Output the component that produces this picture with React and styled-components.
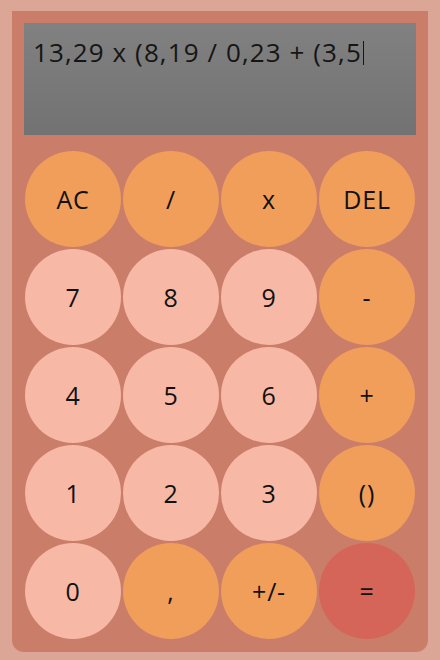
import styled, { createGlobalStyle } from "styled-components";

const GlobalStyle = createGlobalStyle`
  html, body {
    margin: 0;
    padding: 0;
    background: #dca696;
  }
  body {
    font-family: "Open Sans", "Liberation Sans", sans-serif;
  }
`;

const Page = styled.div`
  padding: 11px 12px 8px;
`;

const Calculator = styled.div`
  background: #ca7e6a;
  border-radius: 0 0 12px 12px;
  padding: 12px 12px 13px;
  display: flex;
  flex-direction: column;
  gap: 16px;
`;

const Display = styled.div`
  height: 112px;
  background: linear-gradient(to bottom, #818181, #727272);
  padding: 11px 9px;
  box-sizing: border-box;
  font-size: 26px;
  color: #151515;
  letter-spacing: 1.1px;
`;

const Caret = styled.span`
  display: inline-block;
  width: 1.5px;
  height: 24px;
  background: #151515;
  vertical-align: -3px;
  margin-left: 1px;
`;

const Keys = styled.div`
  display: grid;
  grid-template-columns: repeat(4, 96px);
  gap: 2px;
  padding-left: 1px;
`;

const colors = {
  op: "#f09e5a",
  num: "#f8b8a6",
  eq: "#d56558",
};

const Key = styled.button`
  width: 96px;
  height: 96px;
  border: none;
  border-radius: 50%;
  background: ${(p) => colors[p.$kind]};
  color: #111;
  font-family: inherit;
  font-size: 25px;
  letter-spacing: 0.8px;
  padding: 0;
  display: flex;
  align-items: center;
  justify-content: center;
`;

const keys = [
  ["AC", "op"], ["/", "op"], ["x", "op"], ["DEL", "op"],
  ["7", "num"], ["8", "num"], ["9", "num"], ["-", "op"],
  ["4", "num"], ["5", "num"], ["6", "num"], ["+", "op"],
  ["1", "num"], ["2", "num"], ["3", "num"], ["()", "op"],
  ["0", "num"], [",", "op"], ["+/-", "op"], ["=", "eq"],
];

export default function App() {
  return (
    <>
      <GlobalStyle />
      <Page>
        <Calculator>
          <Display>
            13,29 x (8,19 / 0,23 + (3,5
            <Caret />
          </Display>
          <Keys>
            {keys.map(([label, kind]) => (
              <Key key={label} $kind={kind}>
                {label}
              </Key>
            ))}
          </Keys>
        </Calculator>
      </Page>
    </>
  );
}
